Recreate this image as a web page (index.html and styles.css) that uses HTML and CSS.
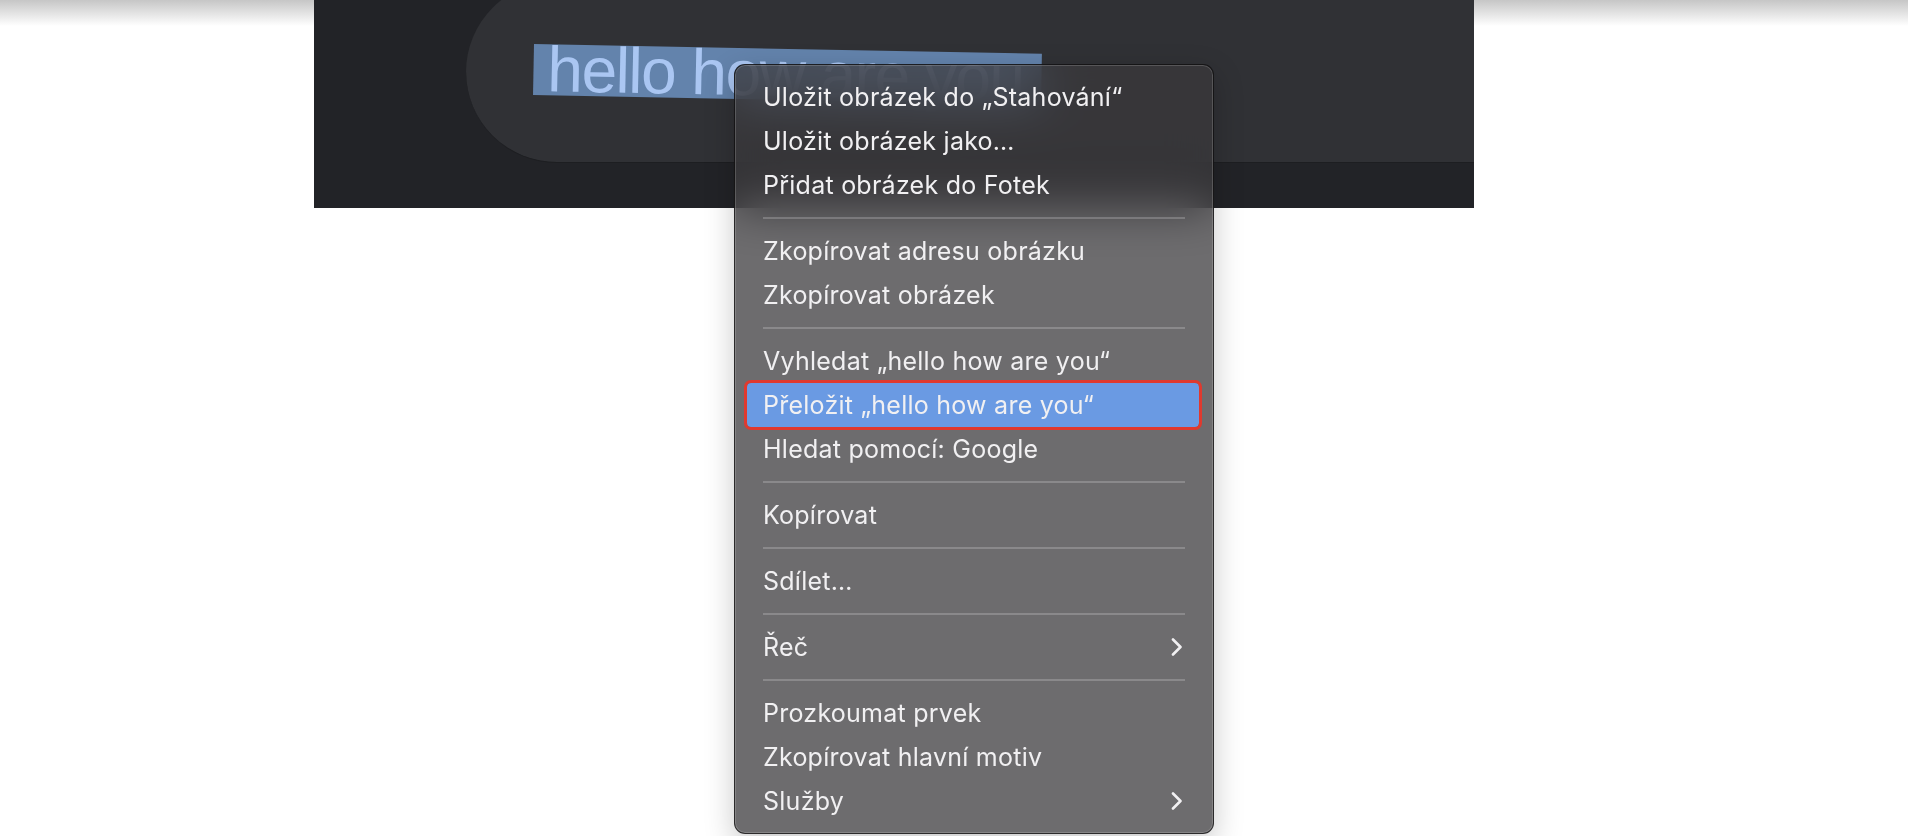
FILE: index.html
```html
<!DOCTYPE html>
<html lang="cs">
<head>
    <meta charset="UTF-8">
    <meta name="viewport" content="width=device-width, initial-scale=1.0">
    <title>Kontextová nabídka</title>

    <link rel="stylesheet" href="styles.css">
</head>
<body>
<div class="shot">
    <div class="search">
        <span class="selected">hello how are you</span>
    </div>
</div>

<ul class="menu">
    <li>Uložit obrázek do „Stahování“</li>
    <li>Uložit obrázek jako…</li>
    <li>Přidat obrázek do Fotek</li>
    <li class="sep"></li>
    <li>Zkopírovat adresu obrázku</li>
    <li>Zkopírovat obrázek</li>
    <li class="sep"></li>
    <li>Vyhledat „hello how are you“</li>
    <li class="active">Přeložit „hello how are you“</li>
    <li>Hledat pomocí: Google</li>
    <li class="sep"></li>
    <li>Kopírovat</li>
    <li class="sep"></li>
    <li>Sdílet…</li>
    <li class="sep"></li>
    <li>Řeč
        <svg class="chevron" width="12" height="18" viewBox="0 0 12 18"><polyline points="2,1.5 9.5,9 2,16.5"/></svg>
    </li>
    <li class="sep"></li>
    <li>Prozkoumat prvek</li>
    <li>Zkopírovat hlavní motiv</li>
    <li>Služby
        <svg class="chevron" width="12" height="18" viewBox="0 0 12 18"><polyline points="2,1.5 9.5,9 2,16.5"/></svg>
    </li>
</ul>
</body>
</html>
```

FILE: styles.css
```css
body {
    margin: 0;
    height: 836px;
    overflow: hidden;
    background: #fff linear-gradient(#c6c6c6, #fff 26px) no-repeat;
    font-family: Inter, "Liberation Sans", Arial, sans-serif;
}

.shot {
    margin-left: 314px;
    width: 1160px;
    height: 208px;
    background-color: #222327;
    overflow: hidden;
}

.search {
    box-sizing: border-box;
    height: 182px;
    margin: -19px 0 0 152px;
    padding: 63px 0 0 68px;
    border-radius: 91px 0 0 91px;
    background-color: #303135;
    border-bottom: 1px solid #1d1e21;
}

.selected {
    display: inline-block;
    box-sizing: border-box;
    width: 508px;
    padding-left: 14px;
    background-color: #6383ac;
    color: #aac6f2;
    font: 64px/51px "Liberation Sans", Arial, sans-serif;
    letter-spacing: -1.5px;
    white-space: nowrap;
    transform: rotate(1.1deg);
    transform-origin: left top;
}

.menu {
    position: absolute;
    left: 734px;
    top: 64px;
    box-sizing: border-box;
    width: 480px;
    margin: 0;
    padding: 10px 0;
    list-style: none;
    background-color: rgba(58, 56, 60, 0.74);
    backdrop-filter: blur(24px);
    border: 1px solid rgba(0, 0, 0, 0.6);
    border-radius: 11px;
    box-shadow: inset 0 0 0 1px rgba(255, 255, 255, 0.16), 0 10px 30px rgba(0, 0, 0, 0.22);
    color: #f1f0f2;
    font-size: 25px;
    letter-spacing: 0.25px;
}

.menu li {
    display: flex;
    align-items: center;
    justify-content: space-between;
    height: 44px;
    padding: 0 30px 0 28px;
}

.menu .sep {
    height: 2px;
    margin: 10px 28px;
    padding: 0;
    background-color: rgba(255, 255, 255, 0.2);
}

.menu .active {
    margin: 0 14px 0 12px;
    padding: 0 16px;
    background-color: #6a9ae3;
    border-radius: 4px;
    outline: 3.5px solid #e0392e;
    outline-offset: 0.5px;
}

.chevron polyline {
    fill: none;
    stroke: #f1f0f2;
    stroke-width: 2.6;
    stroke-linecap: round;
    stroke-linejoin: round;
}
```
